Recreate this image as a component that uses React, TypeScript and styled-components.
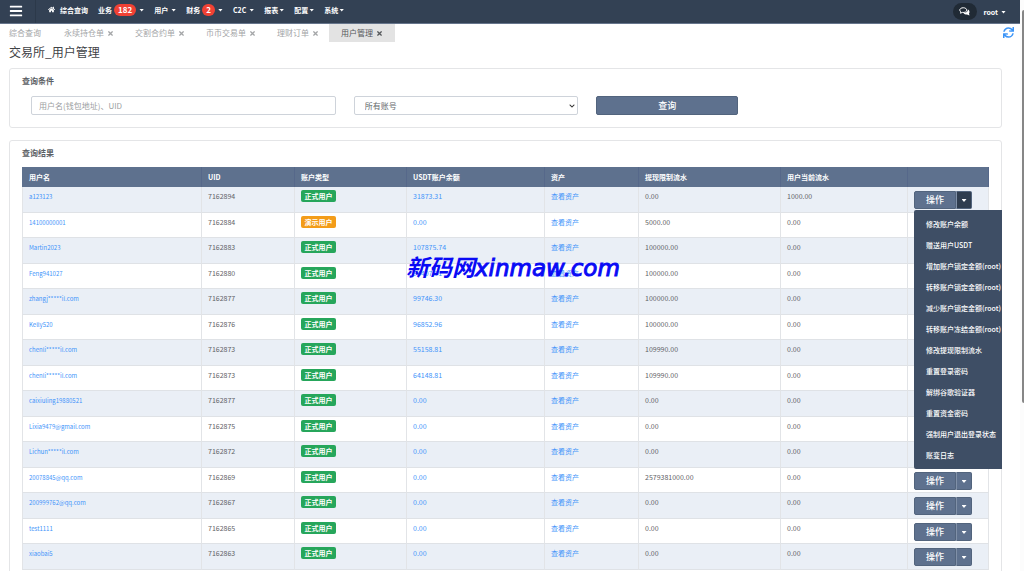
import React from "react";
import styled, { createGlobalStyle, css } from "styled-components";
import { FaBars, FaChevronDown, FaHome, FaSync, FaTimes } from "react-icons/fa";

const Global = createGlobalStyle`
  * { box-sizing: border-box; }
  body {
    margin: 0;
    background: #fff;
    color: #5f6266;
    font: 7px/10px "Noto Sans CJK SC", "Noto Sans", sans-serif;
    overflow: hidden;
  }
  button, input, select { font: inherit; margin: 0; }
  a { text-decoration: none; }
`;

const Shell = styled.div`
  display: flex;
  height: 100vh;
  overflow: hidden;
`;

const Main = styled.div`
  flex: 1;
  min-width: 0;
`;

const ScrollRail = styled.div`
  flex: none;
  width: 4px;
  background: #fcfcfc;
  padding: 10px 0 0 2px;
`;

const ScrollThumb = styled.div`
  height: 70%;
  background: #868686;
  border-radius: 2px 0 0 2px;
`;

const Navbar = styled.nav`
  display: flex;
  align-items: stretch;
  height: 24px;
  background: #334154;
  border-bottom: 1px solid #66758c;
  color: #fff;
  font-weight: 700;
`;

const MenuToggle = styled.button`
  display: flex;
  align-items: center;
  justify-content: center;
  width: 36px;
  padding: 0 4px 2px 0;
  border: 0;
  border-right: 1px solid #2c394a;
  background: none;
  color: #fff;
  font-size: 14px;
`;

const NavList = styled.div`
  display: flex;
  align-items: center;
  flex: 1;
  padding: 0 0 4px 7px;
`;

const NavItem = styled.a<{ $tight?: boolean }>`
  display: flex;
  align-items: center;
  gap: ${(p) => (p.$tight ? 1 : 3)}px;
  padding: 0 5px;
  color: #fff;
  white-space: nowrap;
`;

const HomeIcon = styled(FaHome)`
  margin-right: 2px;
  font-size: 7px;
`;

const Count = styled.span`
  padding: 0 4px;
  margin-left: -1px;
  border-radius: 6px;
  background: #f04134;
  font-size: 8px;
  line-height: 12px;
`;

const Caret = styled.span`
  flex: none;
  width: 5px;
  height: 3px;
  background: currentColor;
  clip-path: polygon(0 0, 100% 0, 50% 100%);
  margin-top: 1px;
`;

const NavUser = styled.div`
  display: flex;
  align-items: center;
  gap: 2px;
  padding-right: 9px;
`;

const ChatButton = styled.button`
  display: flex;
  align-items: center;
  justify-content: center;
  width: 24px;
  height: 17px;
  padding: 0;
  border: 0;
  border-radius: 9px;
  background: #202a35;
`;

const TabBar = styled.div`
  display: flex;
  align-items: flex-start;
  justify-content: space-between;
  height: 18px;
  padding-right: 6px;
`;

const Tabs = styled.div`
  display: flex;
`;

const Tab = styled.a<{ $active?: boolean; $first?: boolean }>`
  display: flex;
  align-items: center;
  gap: 3px;
  height: 18px;
  padding: 0 10px 0 11px;
  color: #a3a5a7;
  font-size: 8px;
  white-space: nowrap;
  svg { font-size: 7px; }
  ${(p) => p.$first && css`padding: 0 12px 0 9px;`}
  ${(p) =>
    p.$active &&
    css`
      padding: 0 12px;
      background: #e3e3e3;
      color: #55585b;
    `}
`;

const Refresh = styled.button`
  padding: 3px 0 0;
  border: 0;
  background: none;
  color: #3b94f7;
  font-size: 11px;
  line-height: 0;
`;

const PageTitle = styled.h1`
  margin: 0;
  padding: 0 9px;
  color: #3f4347;
  font-size: 12px;
  font-weight: 400;
  line-height: 20px;
`;

const Panels = styled.main`
  display: flex;
  flex-direction: column;
  gap: 12px;
  padding: 6px 18px 0 9px;
`;

const Panel = styled.section`
  padding: 7px 12px 12px;
  border: 1px solid #e4e5e7;
  border-radius: 3px;
`;

const PanelTitle = styled.h2`
  margin: 0;
  color: #5c6065;
  font-size: 8px;
  font-weight: 700;
  line-height: 10px;
`;

const Filters = styled.form`
  display: grid;
  grid-template-columns: 304fr 224fr 142fr 232fr;
  gap: 18px;
  padding: 10px 0 0 9px;
`;

const field = css`
  height: 19px;
  width: 100%;
  border: 1px solid #ced3da;
  border-radius: 2px;
  background: #fff;
  color: #66696d;
  font-size: 8px;
`;

const SearchInput = styled.input`
  ${field}
  padding: 0 7px;
  &::placeholder { color: #9b9ea1; }
`;

const SelectBox = styled.div`
  position: relative;
  svg {
    position: absolute;
    top: 7px;
    right: 3px;
    color: #333;
    font-size: 6px;
    pointer-events: none;
  }
`;

const AccountSelect = styled.select`
  ${field}
  appearance: none;
  padding: 0 10px;
`;

const solid = css`
  border: 1px solid #52647d;
  background: #5e718e;
  color: #fff;
  font-size: 9px;
  font-weight: 500;
  padding: 0;
`;

const SearchButton = styled.button`
  ${solid}
  height: 19px;
  border-radius: 2px;
`;

const Table = styled.table`
  width: 100%;
  margin-top: 9px;
  border-collapse: separate;
  border-spacing: 0;
  table-layout: fixed;
`;

const HeadCell = styled.th<{ $width?: number }>`
  width: ${(p) => (p.$width ? `${p.$width}px` : "auto")};
  height: 20px;
  padding: 0 6px;
  border-right: 1px solid #56688a;
  background: #5e718e;
  color: #fff;
  text-align: left;
  font-weight: 700;
  &:first-child { border-left: 1px solid #5e718e; }
`;

const Cell = styled.td`
  padding: 4px 6px 0;
  border-right: 1px solid #e2e4e7;
  border-bottom: 1px solid #dfe2e6;
  vertical-align: top;
  white-space: nowrap;
  &:first-child { border-left: 1px solid #e2e4e7; }
`;

const Row = styled.tr`
  height: 25px;
  &:nth-child(odd) {
    height: 26px;
    background: #eaeff6;
  }
`;

const Link = styled.a`
  color: #4294fa;
`;

const UserLink = styled(Link)`
  display: block;
  font-size: 6px;
  line-height: 12px;
`;

const TypeBadge = styled.span<{ $demo?: boolean }>`
  display: block;
  width: 35px;
  margin-top: -1px;
  border-radius: 2px;
  background: ${(p) => (p.$demo ? "#f39c19" : "#26a65b")};
  color: #fff;
  font-weight: 700;
  line-height: 12px;
  text-align: center;
`;

const Actions = styled.div`
  position: relative;
  display: flex;
  width: 58px;
`;

const ActionButton = styled.button`
  ${solid}
  flex: 1;
  height: 18px;
  border-radius: 2px 0 0 2px;
`;

const ActionToggle = styled.button<{ $open?: boolean }>`
  ${solid}
  display: flex;
  align-items: center;
  justify-content: center;
  width: 16px;
  height: 18px;
  border-left-color: #8090a8;
  border-radius: 0 2px 2px 0;
  ${(p) => p.$open && css`background: #2f3d4f;`}
`;

const Menu = styled.div`
  position: absolute;
  z-index: 2;
  top: 19px;
  left: 0;
  width: 88px;
  padding: 4px 0 3px;
  border-radius: 2px 0 0 2px;
  background: #3e4e65;
`;

const MenuItem = styled.a`
  display: block;
  padding-left: 12px;
  color: #fff;
  font-weight: 500;
  line-height: 21px;
  white-space: nowrap;
`;

const Watermark = styled.div`
  position: absolute;
  z-index: 3;
  top: 251px;
  left: 406px;
  color: #0a0af5;
  font: italic 700 23px/30px "Noto Sans CJK SC", sans-serif;
  white-space: nowrap;
  pointer-events: none;
  span {
    font-family: "DejaVu Sans", sans-serif;
    font-weight: 400;
    -webkit-text-stroke: 1px #0a0af5;
  }
`;

const navItems: { label: string; count?: number; tight?: boolean }[] = [
  { label: "业务", count: 182 },
  { label: "用户" },
  { label: "财务", count: 2 },
  { label: "C2C" },
  { label: "报表", tight: true },
  { label: "配置", tight: true },
  { label: "系统", tight: true },
];

const tabs = ["综合查询", "永续持仓单", "交割合约单", "币币交易单", "理财订单", "用户管理"];

const columns: [string, number?][] = [
  ["用户名"],
  ["UID", 93],
  ["账户类型", 112],
  ["USDT账户余额", 138],
  ["资产", 94],
  ["提现限制流水", 142],
  ["用户当前流水", 127],
  ["", 81],
];

const users = [
  ["a123123", "7162894", "31873.31", "0.00", "1000.00"],
  ["14100000001", "7162884", "0.00", "5000.00", "0.00"],
  ["Martin2023", "7162883", "107875.74", "100000.00", "0.00"],
  ["Feng941027", "7162880", "94407.71", "100000.00", "0.00"],
  ["zhangj*****il.com", "7162877", "99746.30", "100000.00", "0.00"],
  ["Kelly520", "7162876", "96852.96", "100000.00", "0.00"],
  ["chenli*****il.com", "7162873", "55158.81", "109990.00", "0.00"],
  ["chenli*****il.com", "7162873", "64148.81", "109990.00", "0.00"],
  ["caixiuling19880521", "7162877", "0.00", "0.00", "0.00"],
  ["Lixia9479@gmail.com", "7162875", "0.00", "0.00", "0.00"],
  ["Lichun*****il.com", "7162872", "0.00", "0.00", "0.00"],
  ["20078845@qq.com", "7162869", "0.00", "2579381000.00", "0.00"],
  ["200999762@qq.com", "7162867", "0.00", "0.00", "0.00"],
  ["test1111", "7162865", "0.00", "0.00", "0.00"],
  ["xiaobai5", "7162863", "0.00", "0.00", "0.00"],
];

const menuItems = [
  "修改账户余额",
  "赠送用户USDT",
  "增加账户锁定金额(root)",
  "转移账户锁定金额(root)",
  "减少账户锁定金额(root)",
  "转移账户冻结金额(root)",
  "修改提现限制流水",
  "重置登录密码",
  "解绑谷歌验证器",
  "重置资金密码",
  "强制用户退出登录状态",
  "账变日志",
];

const ChatIcon = () => (
  <svg width="11" height="9" viewBox="0 0 22 18" aria-hidden="true">
    <path d="M18 5c3 2 4 5 2 8l1 4-5-2c-3 0-6-1-7-3 5 0 9-3 9-7z" fill="#fff" />
    <path
      d="M8.500 1.500C4.500 1.500 1.500 3.500 1.500 6.200c0 1.500 1 2.800 2.300 3.700L3 12.500l3.500-1.700c5 .8 9-1.200 9-4.600 0-2.700-3-4.700-7-4.700z"
      fill="none"
      stroke="#fff"
      strokeWidth="2"
    />
  </svg>
);

export default function App() {
  return (
    <>
      <Global />
      <Shell>
        <Main>
          <Navbar>
            <MenuToggle aria-label="菜单"><FaBars /></MenuToggle>
            <NavList>
              <NavItem href="#">
                <HomeIcon />
                综合查询
              </NavItem>
              {navItems.map((n) => (
                <NavItem href="#" key={n.label} $tight={n.tight}>
                  {n.label}
                  {n.count && <Count>{n.count}</Count>}
                  <Caret />
                </NavItem>
              ))}
            </NavList>
            <NavUser>
              <ChatButton aria-label="消息"><ChatIcon /></ChatButton>
              <NavItem href="#">
                root
                <Caret />
              </NavItem>
            </NavUser>
          </Navbar>
          <TabBar>
            <Tabs>
              {tabs.map((t, i) => (
                <Tab href="#" key={t} $first={i === 0} $active={i === tabs.length - 1}>
                  {t}
                  {i > 0 && <FaTimes />}
                </Tab>
              ))}
            </Tabs>
            <Refresh aria-label="刷新"><FaSync /></Refresh>
          </TabBar>
          <PageTitle>交易所_用户管理</PageTitle>
          <Panels>
            <Panel>
              <PanelTitle>查询条件</PanelTitle>
              <Filters onSubmit={(e) => e.preventDefault()}>
                <SearchInput aria-label="用户名" placeholder="用户名(钱包地址)、UID" />
                <SelectBox>
                  <AccountSelect aria-label="账号类型">
                    <option>所有账号</option>
                  </AccountSelect>
                  <FaChevronDown />
                </SelectBox>
                <SearchButton>查询</SearchButton>
              </Filters>
            </Panel>
            <Panel>
              <PanelTitle>查询结果</PanelTitle>
              <Table>
                <thead>
                  <tr>
                    {columns.map(([label, width]) => (
                      <HeadCell key={label} $width={width}>{label}</HeadCell>
                    ))}
                  </tr>
                </thead>
                <tbody>
                  {users.map(([name, uid, balance, limit, current], i) => (
                    <Row key={i}>
                      <Cell><UserLink href="#">{name}</UserLink></Cell>
                      <Cell>{uid}</Cell>
                      <Cell><TypeBadge $demo={i === 1}>{i === 1 ? "演示用户" : "正式用户"}</TypeBadge></Cell>
                      <Cell><Link href="#">{balance}</Link></Cell>
                      <Cell><Link href="#">查看资产</Link></Cell>
                      <Cell>{limit}</Cell>
                      <Cell>{current}</Cell>
                      <Cell>
                        <Actions>
                          <ActionButton>操作</ActionButton>
                          <ActionToggle $open={i === 0} aria-label="更多操作"><Caret /></ActionToggle>
                          {i === 0 && (
                            <Menu>
                              {menuItems.map((m) => (
                                <MenuItem href="#" key={m}>{m}</MenuItem>
                              ))}
                            </Menu>
                          )}
                        </Actions>
                      </Cell>
                    </Row>
                  ))}
                </tbody>
              </Table>
            </Panel>
          </Panels>
        </Main>
        <ScrollRail><ScrollThumb /></ScrollRail>
      </Shell>
      <Watermark>新码网<span>xinmaw.com</span></Watermark>
    </>
  );
}
